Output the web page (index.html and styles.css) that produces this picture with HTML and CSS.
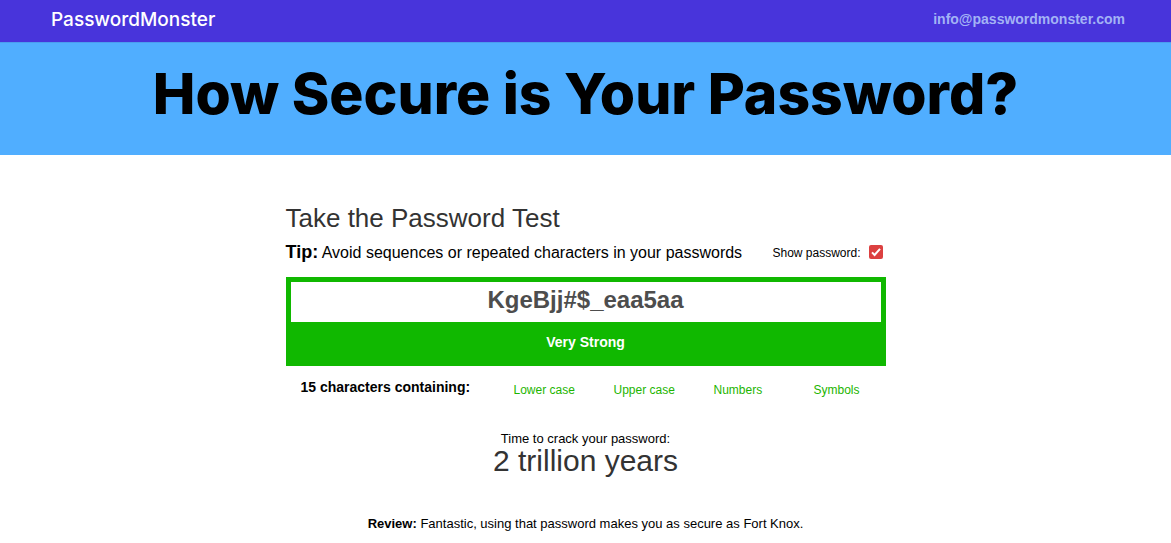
FILE: index.html
```html
<!DOCTYPE html>
<html lang="en">
<head>
<meta charset="utf-8">
<meta name="viewport" content="width=device-width, initial-scale=1">
<title>PasswordMonster</title>
<link rel="stylesheet" href="styles.css">
</head>
<body>
<header class="topbar">
  <a class="logo" href="#">PasswordMonster</a>
  <a class="contact" href="mailto:info@passwordmonster.com">info@passwordmonster.com</a>
</header>
<section class="banner">
  <h1 class="banner-title">How Secure is Your Password?</h1>
</section>
<main class="tester">
  <h2 class="tester-title">Take the Password Test</h2>
  <div class="tip-row">
    <p class="tip"><strong class="tip-label">Tip:</strong> Avoid sequences or repeated characters in your passwords</p>
    <label class="show">Show password:
      <input class="show-box" type="checkbox" checked>
    </label>
  </div>
  <div class="meter">
    <input class="password" type="text" value="KgeBjj#$_eaa5aa" aria-label="Password">
    <p class="strength">Very Strong</p>
  </div>
  <div class="makeup">
    <p class="count">15 characters containing:</p>
    <ul class="kinds">
      <li>Lower case</li>
      <li>Upper case</li>
      <li>Numbers</li>
      <li>Symbols</li>
    </ul>
  </div>
  <p class="crack-label">Time to crack your password:</p>
  <p class="crack-time">2 trillion years</p>
  <p class="review"><strong>Review:</strong> Fantastic, using that password makes you as secure as Fort Knox.</p>
</main>
</body>
</html>
```

FILE: styles.css
```css
* { box-sizing: border-box; }

body {
  margin: 0;
  background: #fff;
  color: #000;
  font-family: "Liberation Sans", Arial, sans-serif;
  font-size: 13px;
}

h1, h2, p, ul { margin: 0; padding: 0; }

.topbar {
  display: flex;
  justify-content: space-between;
  align-items: flex-start;
  padding: 8px 46px 11px 51px;
  background: #4834db;
}

.logo {
  color: #fff;
  font: 500 19px/23px Inter, sans-serif;
  text-decoration: none;
}

.contact {
  color: #a3b3f5;
  font-size: 14px;
  font-weight: bold;
  line-height: 22px;
  text-decoration: none;
}

.banner {
  padding: 15px 16px 26px;
  background: #50aeff;
  border-top: 1px solid #4b9dee;
  text-align: center;
}

.banner-title {
  font: 800 57px/71px Inter, sans-serif;
}

.tester {
  width: 100%;
  max-width: 600px;
  margin: 0 auto;
  padding: 48px 0 8px;
}

.tester-title {
  color: #333;
  font-size: 26px;
  font-weight: normal;
  line-height: 30px;
}

.tip-row {
  display: flex;
  justify-content: space-between;
  align-items: center;
  padding: 8px 3px 13px 0;
}

.tip {
  font-size: 16px;
  line-height: 23px;
}

.tip-label { font-size: 18px; }

.show {
  display: flex;
  align-items: center;
  gap: 8px;
  font-size: 12px;
  line-height: 16px;
}

.show-box {
  appearance: none;
  width: 14px;
  height: 14px;
  margin: 0 0 2px;
  border-radius: 2px;
  background: #dc4040 url("data:image/svg+xml,%3Csvg xmlns='http://www.w3.org/2000/svg' viewBox='0 0 14 14'%3E%3Cpath d='M3 7.4 5.6 10 11 3.8' fill='none' stroke='white' stroke-width='2'/%3E%3C/svg%3E");
}

.meter {
  padding: 5px 5px 0;
  background: #10b800;
}

.password {
  display: block;
  width: 100%;
  height: 40px;
  padding: 0 0 4px;
  border: 0;
  background: #fff;
  color: #4d4d4d;
  font: bold 24px "Liberation Sans", Arial, sans-serif;
  text-align: center;
}

.strength {
  padding: 12px 0 16px;
  color: #fff;
  font-size: 14px;
  font-weight: bold;
  line-height: 16px;
  text-align: center;
}

.makeup {
  display: flex;
  padding: 13px 0 0 15px;
}

.count {
  flex: 0 0 213px;
  font-size: 14px;
  font-weight: bold;
  line-height: 16px;
}

.kinds {
  display: grid;
  flex: 1;
  grid-template-columns: 1fr 1fr 1fr 72px;
  padding-top: 3px;
  color: #1db500;
  font-size: 12px;
  line-height: 16px;
  list-style: none;
}

.crack-label {
  padding-top: 33px;
  line-height: 15px;
  text-align: center;
}

.crack-time {
  color: #333;
  font-size: 30px;
  line-height: 30px;
  text-align: center;
}

.review {
  padding-top: 40px;
  line-height: 16px;
  text-align: center;
}
```
